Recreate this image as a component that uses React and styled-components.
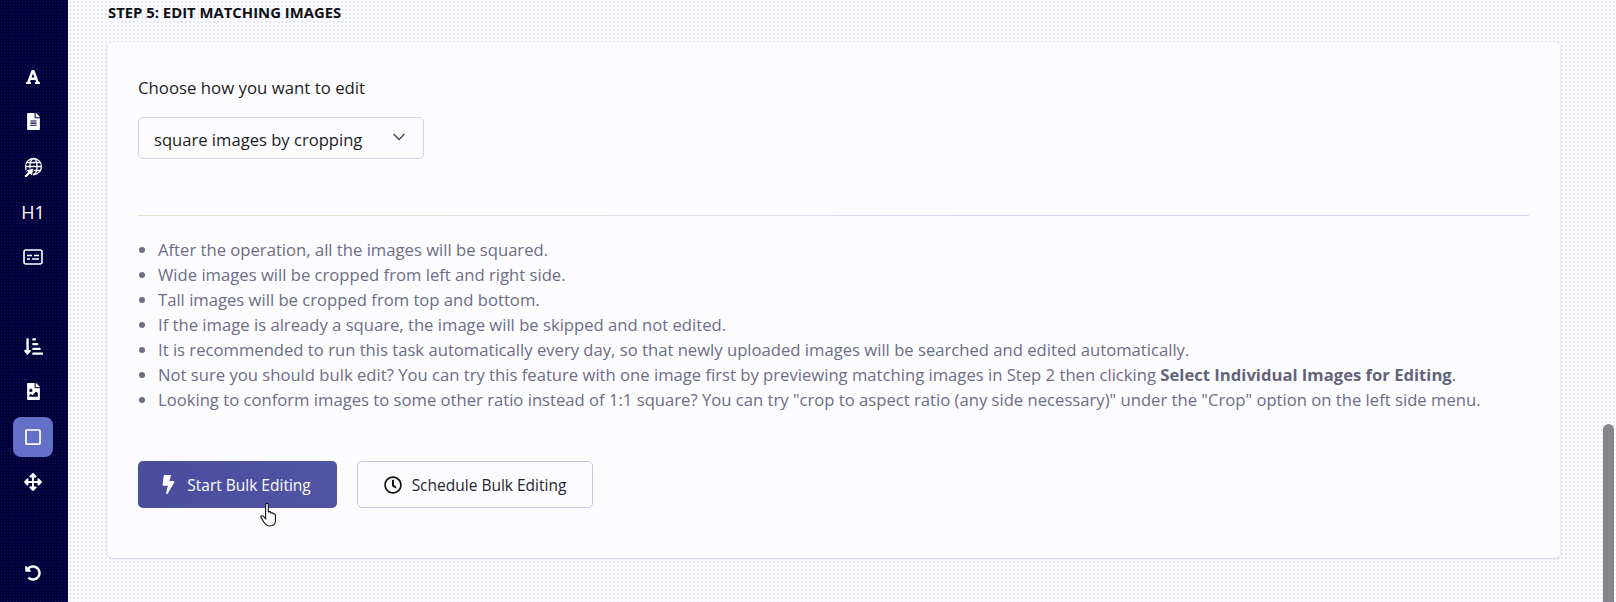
import React from 'react'
import styled, { createGlobalStyle } from 'styled-components'
import { ChevronDown } from 'lucide-react'
import {
  FaFont,
  FaFileAlt,
  FaFileImage,
  FaSortAmountDownAlt,
  FaRegSquare,
  FaArrowsAlt,
  FaUndoAlt,
  FaBolt,
  FaRegClock
} from 'react-icons/fa'

const dots = color => `radial-gradient(${color} 0.7px, transparent 0.8px)`

const GlobalStyle = createGlobalStyle`
  html, body {
    margin: 0;
    height: 100%;
    overflow: hidden;
  }
  body {
    font-family: 'Open Sans', 'Noto Sans', sans-serif;
    background-color: #fcfcff;
  }
`

const Page = styled.div`
  display: flex;
  height: 602px;
  background-color: #fcfcff;
  background-image: ${dots('#e4e6fb')}, ${dots('#f6f6d6')};
  background-size: 4px 4px, 8px 8px;
  background-position: 0 0, 2px 2px;
`

const Sidebar = styled.nav`
  flex: 0 0 68px;
  display: flex;
  flex-direction: column;
  align-items: center;
  box-sizing: border-box;
  padding: 54px 2px 8px 0;
  background-color: #010138;
  background-image: ${dots('#0e0e70')};
  background-size: 3px 3px;
`

const NavGroup = styled.div`
  display: flex;
  flex-direction: column;
  align-items: center;
  margin-top: ${props => props.$top || 0}px;
`

const NavItem = styled.div`
  width: 40px;
  height: 45px;
  display: flex;
  align-items: center;
  justify-content: center;
  color: #fff;
  font-family: 'Open Sans', sans-serif;
  font-size: 18px;
  font-weight: 400;
`

const ActiveNavItem = styled(NavItem)`
  height: 40px;
  margin: 3px 0 2px;
  border-radius: 8px;
  background: #6470c8;
`

const Main = styled.main`
  flex: 1;
  min-width: 0;
  box-sizing: border-box;
  padding: 3px 56px 0 40px;
`

const Heading = styled.h2`
  margin: 0 0 21px;
  font-size: 14.85px;
  line-height: 18px;
  font-weight: 700;
  color: #111;
`

const Card = styled.section`
  box-sizing: border-box;
  height: 516px;
  padding: 34px 31px 0 30px;
  border-radius: 5px;
  background: #fcfcff;
  box-shadow: 0 1px 3px rgba(70, 70, 140, 0.22);
`

const FieldLabel = styled.div`
  font-size: 16.8px;
  line-height: 24px;
  color: #1c1c22;
`

const Select = styled.div`
  box-sizing: border-box;
  width: 286px;
  height: 42px;
  margin-top: 17px;
  padding: 3px 14px 0 15px;
  display: flex;
  align-items: center;
  justify-content: space-between;
  border: 1px solid #cdd2e6;
  border-radius: 5px;
  font-size: 16.6px;
  color: #1c1c22;
  svg {
    position: relative;
    top: -3px;
    color: #55556a;
  }
`

const Divider = styled.hr`
  height: 1px;
  margin: 56px 0 0;
  border: 0;
  background: linear-gradient(to right, #e0e5c6, #d4d6ee 60%);
`

const Notes = styled.ul`
  margin: 21px 0 0;
  padding: 0 0 0 20px;
  font-size: 16.65px;
  line-height: 25px;
  color: #6d6d85;
  li::marker {
    color: #6d6d85;
  }
  b {
    font-weight: 700;
    color: #63637a;
  }
`

const Actions = styled.div`
  display: flex;
  gap: 20px;
  margin-top: 49px;
`

const Button = styled.button`
  position: relative;
  box-sizing: border-box;
  height: 47px;
  display: flex;
  align-items: center;
  justify-content: center;
  gap: 10px;
  border-radius: 5px;
  font-family: inherit;
  font-size: 15.5px;
`

const PrimaryButton = styled(Button)`
  width: 199px;
  padding: 0 5px 0 0;
  gap: 9px;
  border: 0;
  background: linear-gradient(to right, #4a4d9e, #5054a6);
  color: #fff;
`

const SecondaryButton = styled(Button)`
  width: 236px;
  border: 1px solid #c4c6e4;
  background: #fcfcff;
  color: #26262e;
`

const Cursor = styled.svg`
  position: absolute;
  left: 122px;
  top: 41px;
  width: 18px;
  height: 25px;
`

const ScrollThumb = styled.div`
  position: fixed;
  right: 2px;
  top: 424px;
  bottom: 0;
  width: 11px;
  border-radius: 6px 6px 0 0;
  background: #85858a;
`

const Caption = () => (
  <svg width="20" height="16" viewBox="0 0 20 16" fill="none" stroke="#fff" strokeWidth="1.6">
    <rect x="1" y="1" width="18" height="14" rx="2" />
    <path d="M4 6.5h5M11 6.5h5M4 10h3M9 10h7" />
  </svg>
)

const GlobeArrow = () => (
  <svg width="20" height="20" viewBox="0 0 20 20" fill="none" stroke="#fff" strokeWidth="1.3">
    <circle cx="10.5" cy="9.500" r="8" />
    <ellipse cx="10.5" cy="9.500" rx="3.6" ry="8" />
    <path d="M2.5 9.500h16M3.600 5.500h13.800M3.600 13.500h13.800" />
    <path d="M1 19l4-4-2-2 8-2-2 8-2-2-4 4z" fill="#fff" stroke="#010138" strokeWidth="0.8" />
  </svg>
)

const notes = [
  'After the operation, all the images will be squared.',
  'Wide images will be cropped from left and right side.',
  'Tall images will be cropped from top and bottom.',
  'If the image is already a square, the image will be skipped and not edited.',
  'It is recommended to run this task automatically every day, so that newly uploaded images will be searched and edited automatically.'
]

export default function App() {
  return (
    <Page>
      <GlobalStyle />
      <Sidebar>
        <NavGroup>
          <NavItem><FaFont size={16} /></NavItem>
          <NavItem><FaFileAlt size={17} /></NavItem>
          <NavItem><GlobeArrow /></NavItem>
          <NavItem>H1</NavItem>
          <NavItem><Caption /></NavItem>
        </NavGroup>
        <NavGroup $top={45}>
          <NavItem><FaSortAmountDownAlt size={19} /></NavItem>
          <NavItem><FaFileImage size={17} /></NavItem>
          <ActiveNavItem><FaRegSquare size={18} /></ActiveNavItem>
          <NavItem><FaArrowsAlt size={18} /></NavItem>
        </NavGroup>
        <NavGroup $top={46}>
          <NavItem><FaUndoAlt size={16} /></NavItem>
        </NavGroup>
      </Sidebar>
      <Main>
        <Heading>STEP 5: EDIT MATCHING IMAGES</Heading>
        <Card>
          <FieldLabel>Choose how you want to edit</FieldLabel>
          <Select>
            square images by cropping
            <ChevronDown size={20} />
          </Select>
          <Divider />
          <Notes>
            {notes.map(note => <li key={note}>{note}</li>)}
            <li>
              Not sure you should bulk edit? You can try this feature with one image first by previewing matching images in Step 2 then clicking <b>Select Individual Images for Editing</b>.
            </li>
            <li>
              Looking to conform images to some other ratio instead of 1:1 square? You can try "crop to aspect ratio (any side necessary)" under the "Crop" option on the left side menu.
            </li>
          </Notes>
          <Actions>
            <PrimaryButton>
              <FaBolt size={19} />
              Start Bulk Editing
              <Cursor viewBox="0 0 16 24" preserveAspectRatio="none" fill="#fff" stroke="#111" strokeWidth="1">
                <path d="M5 2.500c0-1.600 2.400-1.600 2.400 0V10c0-1 2.200-1 2.200 0v1c0-1 2.100-1 2.100 0v1c0-1 2-1 2 .2V18c0 3-1.800 5-5 5-3 0-4-1.600-5.500-4L1 15c-.8-1.400 1-2.400 2-1.200L5 16V2.500z" />
              </Cursor>
            </PrimaryButton>
            <SecondaryButton>
              <FaRegClock size={18} color="#111" />
              Schedule Bulk Editing
            </SecondaryButton>
          </Actions>
        </Card>
      </Main>
      <ScrollThumb />
    </Page>
  )
}
